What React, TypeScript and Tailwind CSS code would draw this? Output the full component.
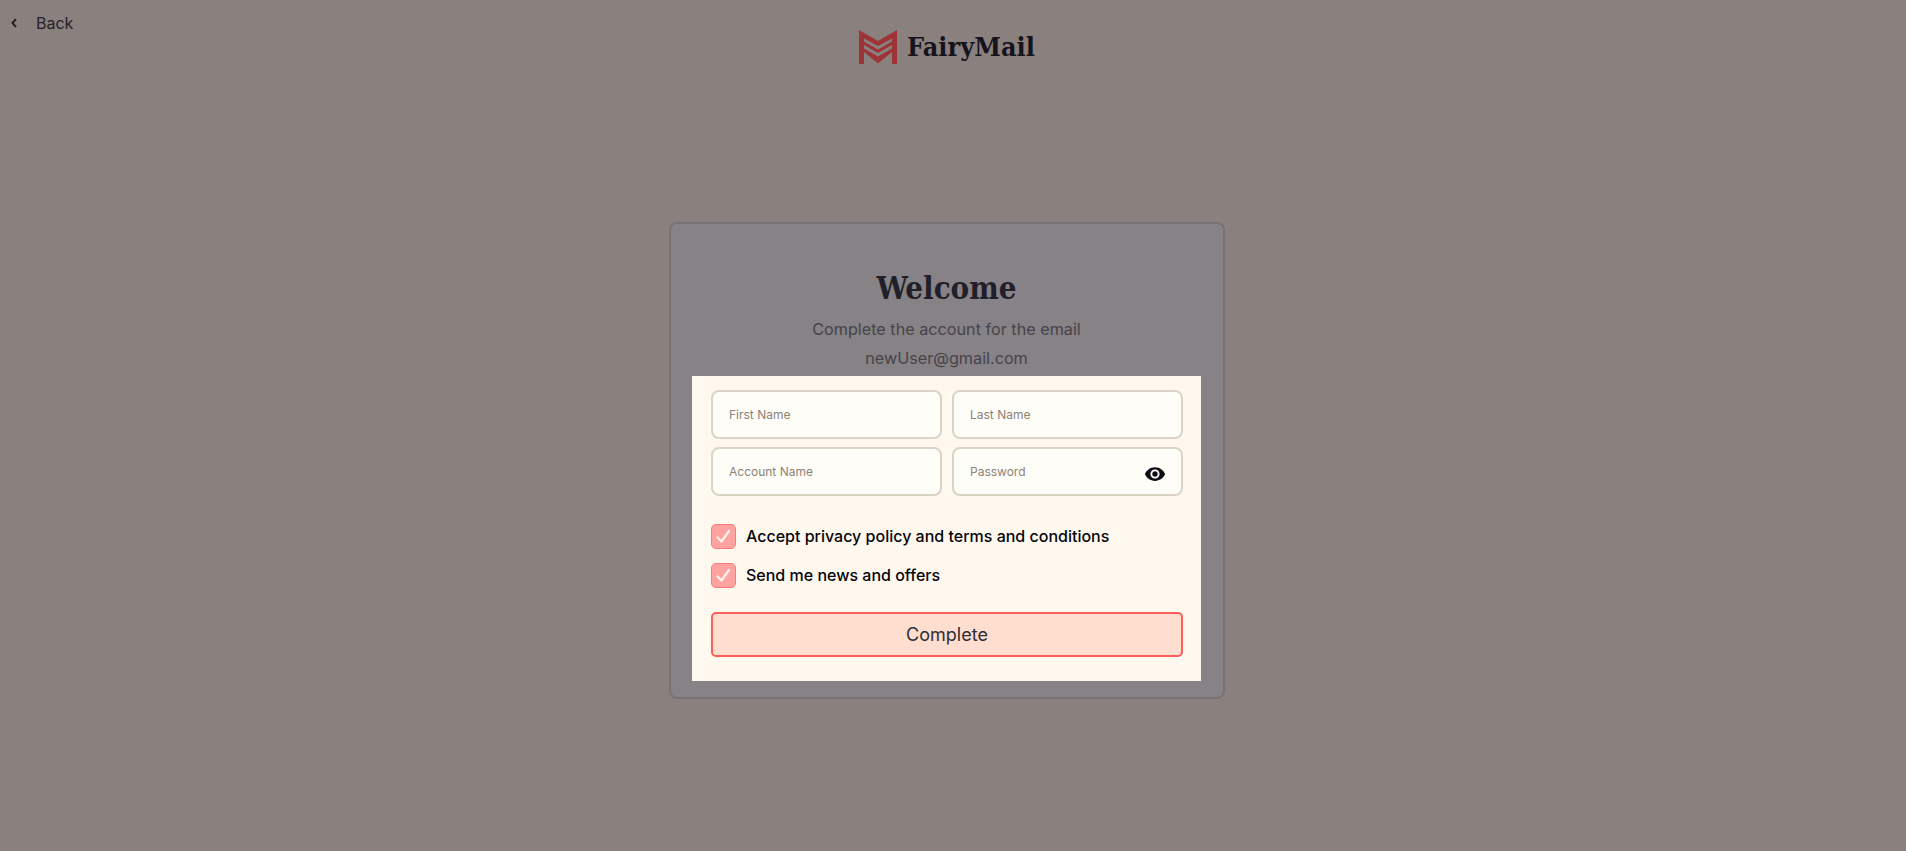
import React from "react";

const inter = "font-['Inter',sans-serif]";
const serif = "font-['DejaVu_Serif_Condensed','DejaVu_Serif',serif]";

function Field({ label, children }: { label: string; children?: React.ReactNode }) {
  return (
    <div className="relative flex h-[49px] items-center rounded-lg border-2 border-[#dbd3c6] bg-[#fffdf8] pl-[16px] text-[12px] text-[#8b8378]">
      <span className="mt-[1px]">{label}</span>
      {children}
    </div>
  );
}

function Check({ label }: { label: string }) {
  return (
    <div className="flex h-[25px] items-center gap-[10px]">
      <div className="flex h-[25px] w-[25px] items-center justify-center rounded-[5px] border border-[#ff7b78] bg-[#ffa3a0]">
        <svg width="17" height="17" viewBox="0 0 17 17" fill="none" stroke="#fff6ee" strokeWidth="2.2" strokeLinecap="round" strokeLinejoin="round">
          <path d="M2.5 9.5 L6.5 13.5 L14 3" />
        </svg>
      </div>
      <span className="-mt-[2px] text-[16px] font-medium text-[#05050a]">{label}</span>
    </div>
  );
}

function Logo() {
  return (
    <svg width="38" height="34" viewBox="0 0 38 34" fill="#9e3338">
      <path d="M0 0 L19 11 L38 0 V34 H33 V8.5 L19 16 L5 8.5 V34 H0 Z" />
      <path d="M5 11.5 L19 19.5 L33 11.5 V15 L19 23 L5 15 Z" />
      <path d="M5 18.5 L19 26.5 L33 18.5 V22 L19 33.5 L5 22 Z" />
    </svg>
  );
}

export default function App() {
  return (
    <div className={`${inter} flex min-h-[851px] flex-col items-center bg-[#8a807d] pr-[13px]`}>
      <div className="relative flex h-[222px] w-full justify-center pt-[29px]">
        <div className="absolute left-[11px] top-[11px] flex h-[24px] items-center gap-[19px] text-[16px] text-[#25222b]">
          <svg width="6" height="10" viewBox="0 0 6 10" fill="none" stroke="#17151d" strokeWidth="1.8">
            <path d="M5 1 L1.5 5 L5 9" />
          </svg>
          <span>Back</span>
        </div>
        <div className="flex h-[36px] items-center gap-[10px] pl-[1px]">
          <Logo />
          <span className={`${serif} text-[26.8px] font-bold text-[#15141c]`}>FairyMail</span>
        </div>
      </div>

      <div className="flex h-[477px] w-[556px] flex-col items-center rounded-lg border-2 border-[#767276] bg-[#868285] px-[20px] pt-[42px]">
        <h1 className={`${serif} h-[44px] text-[31px] font-bold leading-[44px] text-[#211f29]`}>Welcome</h1>
        <p className="mt-[5px] text-[16.2px] leading-[29px] text-[#46434b]">Complete the account for the email</p>
        <p className="text-[16.2px] leading-[29px] text-[#46434b]">newUser@gmail.com</p>
        <div className="mt-[3px] flex h-[305px] w-[509px] flex-col bg-[#fff8ef] pl-[19px] pr-[18px] pt-[14px]">
          <div className="grid grid-cols-2 gap-x-[10px] gap-y-[8px]">
            <Field label="First Name" />
            <Field label="Last Name" />
            <Field label="Account Name" />
            <Field label="Password">
              <svg className="absolute right-[15px] top-[14px]" width="22" height="22" viewBox="0 0 24 24" fill="#0c0b14">
                <path d="M12 4.5C7 4.5 2.73 7.61 1 12c1.73 4.39 6 7.5 11 7.5s9.27-3.11 11-7.5c-1.73-4.39-6-7.5-11-7.5zM12 17c-2.76 0-5-2.24-5-5s2.24-5 5-5 5 2.24 5 5-2.24 5-5 5zm0-8c-1.66 0-3 1.34-3 3s1.34 3 3 3 3-1.34 3-3-1.34-3-3-3z" />
              </svg>
            </Field>
          </div>
          <div className="mt-[28px] flex flex-col gap-[14px]">
            <Check label="Accept privacy policy and terms and conditions" />
            <Check label="Send me news and offers" />
          </div>
          <button className="mt-[24px] h-[45px] w-full rounded-[5px] border-2 border-[#ff5f5b] bg-[#ffddcf] text-[18px] text-[#2e2e35]">
            Complete
          </button>
        </div>
      </div>
    </div>
  );
}
